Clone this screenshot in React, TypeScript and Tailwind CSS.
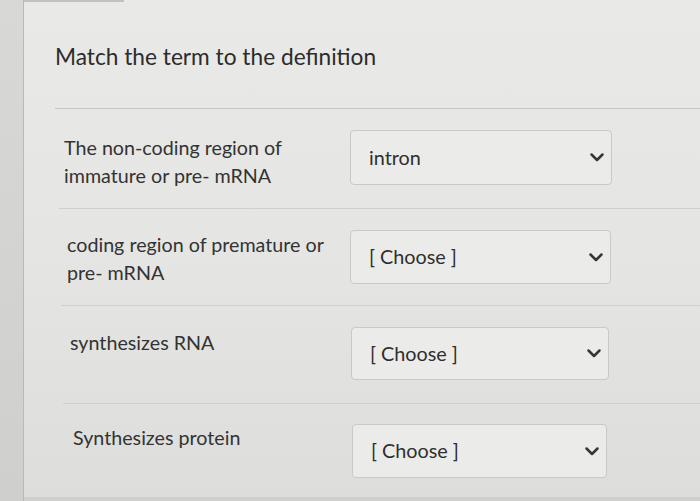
import React from "react";

const Chevron = () => (
  <svg width="16" height="11" viewBox="0 0 16 11" className="shrink-0">
    <path d="M2.5 2.5 L8 8 L13.5 2.5" fill="none" stroke="#353535" strokeWidth="2.5" strokeLinecap="round" strokeLinejoin="round" />
  </svg>
);

type Row = {
  lines: string[];
  value: string;
  textPl: string;
  selectW: string;
  rowH: string;
  textPt: string;
  selectPt: string;
  selectH: string;
  sepMl: string;
  textW: string;
};

const rows: Row[] = [
  { lines: ["The non-coding region of", "immature or pre- mRNA"], value: "intron", textPl: "pl-[9px]", textW: "w-[295px]", selectW: "w-[262px]", rowH: "h-[99px]", textPt: "pt-[25px]", selectPt: "pt-[21px]", selectH: "h-[55px]", sepMl: "ml-[4px]" },
  { lines: ["coding region of premature or", "pre- mRNA"], value: "[ Choose ]", textPl: "pl-[12px]", textW: "w-[295px]", selectW: "w-[261px]", rowH: "h-[96px]", textPt: "pt-[22px]", selectPt: "pt-[21px]", selectH: "h-[54px]", sepMl: "ml-[6px]" },
  { lines: ["synthesizes RNA"], value: "[ Choose ]", textPl: "pl-[15px]", textW: "w-[296px]", selectW: "w-[258px]", rowH: "h-[97px]", textPt: "pt-[23px]", selectPt: "pt-[21px]", selectH: "h-[53px]", sepMl: "ml-[8px]" },
  { lines: ["Synthesizes protein"], value: "[ Choose ]", textPl: "pl-[18px]", textW: "w-[297px]", selectW: "w-[255px]", rowH: "h-[97px]", textPt: "pt-[20px]", selectPt: "pt-[20px]", selectH: "h-[54px]", sepMl: "ml-[10px]" },
];

export default function App() {
  return (
    <div className="w-[700px] h-[501px] overflow-hidden flex bg-[#d2d2d0] font-['Lato','Noto_Sans',sans-serif] text-[#3b3b3b]">
      <div className="w-[23px] shrink-0 bg-gradient-to-b from-[#d8d8d6] to-[#cfcfcd]" />
      <div className="flex-1 flex flex-col border-l border-[#b9b9b7] bg-gradient-to-b from-[#e9e9e7] via-[#e5e5e3] to-[#dddddb]">
        <div className="h-[2px] w-[100px] bg-[#c2c2c0]" />
        <div className="h-[495px] flex flex-col pl-[31px]">
          <h1 className="pt-[40px] text-[22.7px] leading-[30px] text-[#2c2c2c]">
            Match the term to the definition
          </h1>
          <div className="mt-[36px] h-px shrink-0 bg-[#c6c6c4]" />
          {rows.map((r, i) => (
            <div key={i} className="flex flex-col">
              <div className={`flex ${r.rowH}`}>
                <div className={`${r.textPl} ${r.textPt} ${r.textW} shrink-0 text-[19.7px] leading-[28px] text-[#333333]`}>
                  {r.lines.map((l, j) => (
                    <div key={j} className="whitespace-nowrap">{l}</div>
                  ))}
                </div>
                <div className={r.selectPt}>
                  <div className={`${r.selectW} ${r.selectH} flex items-center justify-between pl-[18px] pr-[6px] border border-[#c9c9c7] rounded-[4px] bg-[#ebebe9] text-[19.8px] text-[#2f2f2f]`}>
                    <span>{r.value}</span>
                    <Chevron />
                  </div>
                </div>
              </div>
              <div className={`${r.sepMl} h-px shrink-0 ${i === 3 ? "bg-transparent" : "bg-[#cfcfcd]"}`} />
            </div>
          ))}
        </div>
        <div className="flex-1 bg-[#cfcfcd]" />
      </div>
    </div>
  );
}
